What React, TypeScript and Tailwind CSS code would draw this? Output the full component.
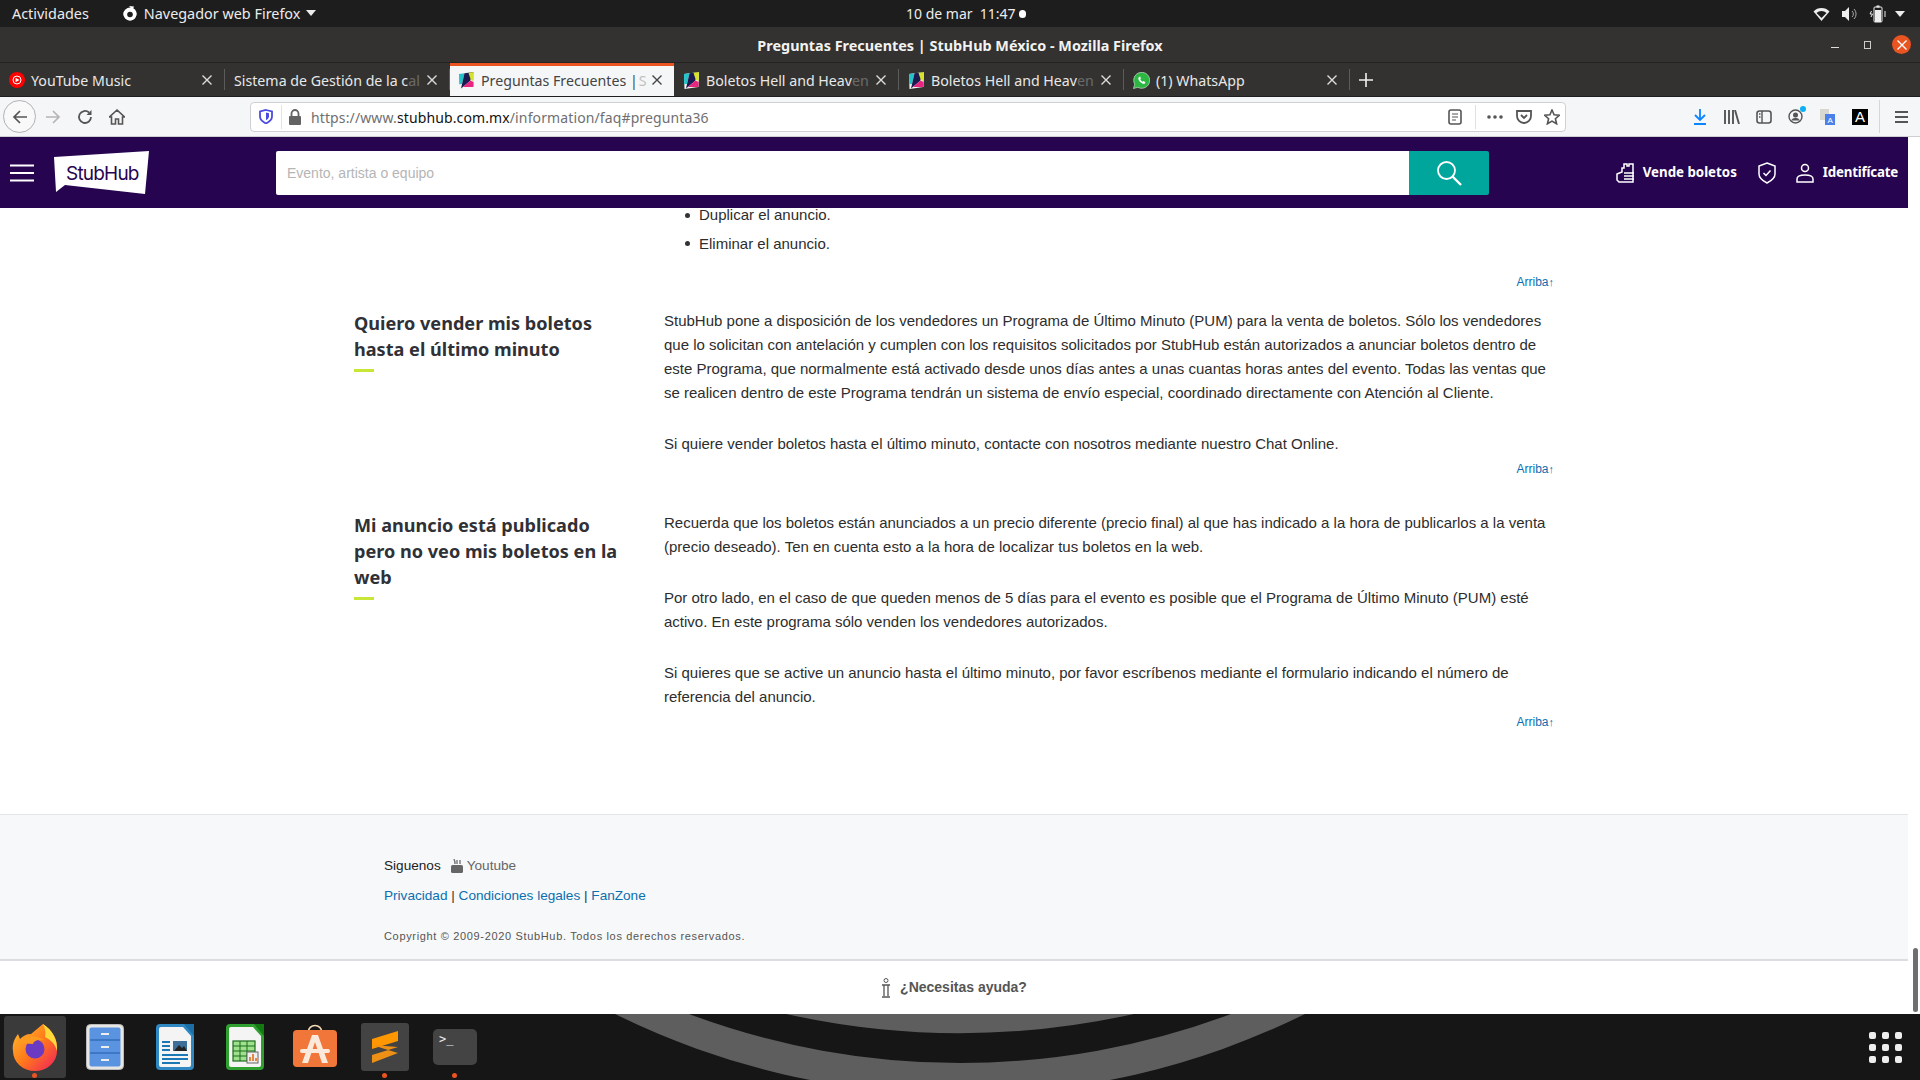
import React from "react";

const UI = { fontFamily: '"Noto Sans", "Open Sans", sans-serif' };
const ARIAL = { fontFamily: '"Liberation Sans", Arial, sans-serif' };

const Fav = () => (
  <svg width="17" height="17" viewBox="0 0 17 17" className="shrink-0">
    <polygon points="1,2 16,0 15.500,15 1.500,17" fill="#f4f4f4" />
    <polygon points="1,2 6.500,1.300 4,12 1.200,12.300" fill="#25c3c9" />
    <polygon points="6.500,1.300 16,0 12,9 3,16.500" fill="#1c1a50" />
    <polygon points="10.500,.8 16,0 15.700,9 12.800,8" fill="#d6e32e" />
    <polygon points="5,15 12.500,8.500 15.600,10 15.500,15 " fill="#e8267f" />
  </svg>
);

const Close = ({ c = "#ddd" }: { c?: string }) => (
  <svg width="12" height="12" viewBox="0 0 12 12" className="shrink-0">
    <path d="M1.500 1.500l9 9M10.500 1.500l-9 9" stroke={c} strokeWidth="1.400" />
  </svg>
);

function Tab({ w, icon, label, tail, active, sep = true }: { w: string; icon?: React.ReactNode; label: string; tail?: string; active?: boolean; sep?: boolean }) {
  return (
    <div className={`${w} h-full relative flex items-center shrink-0 ${active ? "bg-[#f5f6f7] text-[#444] border-t-[3px] border-[#e95420] pb-[1px]" : "text-[#e8e8e8] pt-[2px]"}`}>
      <div className={`flex items-center gap-[6px] ${active ? "pl-[8px] pr-[11px]" : "pl-[9px] pr-[12px]"} w-full`}>
        {icon}
        <span className="flex-1 min-w-0 whitespace-nowrap">{label}{tail && <span className={`opacity-30 ${active ? "ml-[1px]" : ""}`}>{tail}</span>}</span>
        <Close c={active ? "#444" : "#ddd"} />
      </div>
      {sep && !active && <div className="absolute right-0 top-[6px] bottom-[6px] w-px bg-[#5c5c5c]" />}
    </div>
  );
}

const TopBar = () => (
  <div className="h-[27px] bg-[#1d1d1d] text-[#ececec] text-[14.4px] flex items-center justify-between pl-3 pr-[15px] relative shrink-0" style={UI}>
    <div className="flex items-center gap-[33px]">
      <span>Actividades</span>
      <div className="flex items-center gap-[6px]">
        <svg width="16" height="17" viewBox="0 0 16 17"><path d="M8 2.500a6.500 6.500 0 1 1-5.500 3L4 8a4 4 0 1 0 4-2.500l1.500-2L7 1l5 .5-1 2.500z" fill="#fff" /><circle cx="8" cy="9" r="6.500" fill="#fff" /><circle cx="8" cy="9.500" r="2.800" fill="#1d1d1d" /></svg>
        <span>Navegador web Firefox</span>
        <svg width="10" height="6" viewBox="0 0 10 6"><path d="M0 0h10L5 6z" fill="#ececec" /></svg>
      </div>
    </div>
    <div className="absolute left-[906px] top-0 h-full flex items-center gap-[3px] text-[14px]">
      <span className="whitespace-pre">10 de mar  11:47</span>
      <span className="w-[7px] h-[8px] rounded-full bg-white" />
    </div>
    <div className="flex items-center">
      <svg width="17" height="14" viewBox="0 0 17 14"><path d="M0.500 4.500a11 11 0 0 1 16 0L8.500 14z" fill="#eee" /><path d="M3.500 6a7 7 0 0 1 10 0L8.500 11z" fill="#1d1d1d" /></svg>
      <svg width="16" height="14" viewBox="0 0 16 14" className="ml-[12px]"><path d="M0 4h3l4-4v14l-4-4H0z" fill="#eee" /><path d="M10 4a4 4 0 0 1 0 6M12 2a7 7 0 0 1 0 10" stroke="#aaa" fill="none" /></svg>
      <svg width="18" height="18" viewBox="0 0 18 18" className="ml-[11px]"><rect x="5" y="2" width="8" height="15" rx="1" fill="none" stroke="#eee" /><rect x="6" y="5" width="6" height="12" fill="#eee" /><rect x="7.500" y="0.500" width="3" height="2" fill="#eee" /><path d="M2.500 6l-1.500 3h2.500l-1.500 3M16 6v6" stroke="#eee" fill="none" /></svg>
      <svg width="10" height="6" viewBox="0 0 10 6" className="ml-[8px]"><path d="M0 0h10L5 6z" fill="#ececec" /></svg>
    </div>
  </div>
);

const TitleBar = () => (
  <div className="h-[36px] bg-[#333230] border-b border-[#242424] flex items-center justify-center relative shrink-0 pt-[2px]" style={UI}>
    <span className="text-[#f2f2f2] text-[14.4px] font-bold">Preguntas Frecuentes | StubHub México - Mozilla Firefox</span>
    <div className="absolute right-[9px] top-0 h-full flex items-center">
      <span className="w-[8px] h-px bg-[#ddd] mt-[6px]" />
      <span className="w-[7px] h-[8px] border border-[#ccc] ml-[25px]" />
      <span className="w-[19px] h-[19px] rounded-full bg-[#e95420] flex items-center justify-center ml-[21px]"><Close c="#fff" /></span>
    </div>
  </div>
);

const TabBar = () => (
  <div className="h-[34px] bg-[#333230] border-b border-[#1f1f1f] flex items-center text-[14.2px] shrink-0" style={UI}>
    <Tab w="w-[225px]" label="YouTube Music" icon={
      <svg width="16" height="16" viewBox="0 0 16 16" className="shrink-0"><circle cx="8" cy="8" r="8" fill="#f00" /><circle cx="8" cy="8" r="4" fill="none" stroke="#fff" /><path d="M6.500 5.800L10.500 8l-4 2.200z" fill="#fff" /></svg>
    } />
    <Tab w="w-[225px]" label="Sistema de Gestión de la c" tail="al" />
    <Tab w="w-[224px]" label="Preguntas Frecuentes |" tail="S" icon={<Fav />} active sep={false} />
    <Tab w="w-[225px]" label="Boletos Hell and Heav" tail="en" icon={<Fav />} />
    <Tab w="w-[225px]" label="Boletos Hell and Heav" tail="en" icon={<Fav />} />
    <Tab w="w-[226px]" label="(1) WhatsApp" icon={
      <svg width="17" height="17" viewBox="0 0 17 17" className="shrink-0"><path d="M0.500 16.500l1.200-4.300A8 8 0 1 1 4.800 15.300z" fill="#2cb742" stroke="#e9f7ea" strokeWidth=".6" /><path d="M6 5c-1.500 1.500 0 4 1.500 5.200s3.200 2.200 4.500 1.200l.3-1.500-2-1-.8.800C8.500 9.200 7.800 8.500 7.200 7.200l.7-.8L7.200 4.500z" fill="#fff" /></svg>
    } />
    <div className="w-[32px] h-full flex items-center justify-center">
      <svg width="14" height="14" viewBox="0 0 14 14"><path d="M7 0v14M0 7h14" stroke="#f0f0f0" strokeWidth="1.600" /></svg>
    </div>
  </div>
);

const IC = "#555";
const Toolbar = () => (
  <div className="h-[40px] bg-[#f5f6f7] border-b border-[#cfcfd2] flex items-center relative shrink-0" style={UI}>
    <div className="w-[33px] h-[33px] ml-[3px] rounded-full border border-[#b1b1b3] bg-[#f9f9fa] flex items-center justify-center">
      <svg width="16" height="16" viewBox="0 0 16 16"><path d="M15 8H2M8 2L2 8l6 6" stroke={IC} strokeWidth="1.700" fill="none" /></svg>
    </div>
    <div className="w-[33px] flex justify-center">
      <svg width="16" height="16" viewBox="0 0 16 16"><path d="M1 8h13M8 2l6 6-6 6" stroke="#b5b5b5" strokeWidth="1.700" fill="none" /></svg>
    </div>
    <div className="w-[32px] flex justify-center">
      <svg width="16" height="16" viewBox="0 0 16 16"><path d="M14 8a6 6 0 1 1-2-4.500" stroke={IC} strokeWidth="1.800" fill="none" /><path d="M14.500 1v5h-5z" fill={IC} /></svg>
    </div>
    <div className="w-[32px] flex justify-center">
      <svg width="16" height="16" viewBox="0 0 16 16"><path d="M8 1L0.500 8h2v7h4v-5h3v5h4V8h2z" stroke={IC} strokeWidth="1.600" fill="none" /></svg>
    </div>
    <div className="ml-[117px] w-[1316px] h-[30px] bg-white border border-[#cfd0d3] rounded-[4px] flex items-center">
      <div className="w-[31px] h-[24px] flex items-center justify-center border-r border-[#e3e3e3]">
        <svg width="14" height="15" viewBox="0 0 14 15"><path d="M7 1l6 1.500v5C13 11 10 13 7 14.500 4 13 1 11 1 7.500v-5z" fill="none" stroke="#4a4ae0" strokeWidth="1.800" /><path d="M7 3.500l3 .7v3c0 2-1.500 3-3 4z" fill="#4a4ae0" /></svg>
      </div>
      <svg width="14" height="16" viewBox="0 0 14 16" className="ml-[6px]"><rect x="1" y="7" width="12" height="9" rx="1" fill="#636363" /><path d="M3.500 7V4.500a3.500 3.500 0 0 1 7 0V7" stroke="#636363" strokeWidth="1.800" fill="none" /></svg>
      <span className="ml-[9px] mt-[2px] text-[14px] tracking-[0.12px] text-[#6f6f72] whitespace-nowrap flex-1">https://www.<span className="text-[#111]">stubhub.com.mx</span>/information/faq#pregunta36</span>
      <svg width="14" height="16" viewBox="0 0 14 16"><rect x="1" y="1" width="12" height="14" rx="2" fill="none" stroke={IC} strokeWidth="1.600" /><path d="M4 5h6M4 8h6M4 11h4" stroke={IC} strokeWidth="1.200" /></svg>
      <div className="w-px h-[24px] bg-[#e0e0e0] ml-[13px] mr-[11px]" />
      <svg width="16" height="4" viewBox="0 0 16 4"><circle cx="2" cy="2" r="1.800" fill={IC} /><circle cx="8" cy="2" r="1.800" fill={IC} /><circle cx="14" cy="2" r="1.800" fill={IC} /></svg>
      <svg width="16" height="16" viewBox="0 0 16 16" className="ml-[13px]"><path d="M1 2h14v5a7 7 0 0 1-14 0z" fill="none" stroke={IC} strokeWidth="1.800" /><path d="M5 6l3 3 3-3" fill="none" stroke={IC} strokeWidth="1.800" /></svg>
      <svg width="16" height="16" viewBox="0 0 16 16" className="ml-[12px] mr-[5px]"><path d="M8 1l2.100 4.800 5.200.5-3.900 3.400 1.200 5.100L8 12.100l-4.600 2.700 1.200-5.100L.7 6.300l5.200-.5z" fill="none" stroke={IC} strokeWidth="1.600" /></svg>
    </div>
    <div className="ml-[127px] flex items-center">
      <svg width="14" height="16" viewBox="0 0 14 16"><path d="M7 0v11M2 6l5 5 5-5" stroke="#0a84ff" strokeWidth="1.800" fill="none" /><path d="M1 15h12" stroke="#0a84ff" strokeWidth="2" /></svg>
      <svg width="16" height="14" viewBox="0 0 16 14" className="ml-[17px]"><path d="M1 0v14M5 0v14M9 0v14M11 0l4 14" stroke={IC} strokeWidth="1.900" fill="none" /></svg>
      <svg width="16" height="14" viewBox="0 0 16 14" className="ml-[16px]"><rect x="1" y="1" width="14" height="12" rx="2.500" fill="none" stroke={IC} strokeWidth="1.600" /><path d="M6 1v12M3 4h1.500M3 7h1.500" stroke={IC} strokeWidth="1.400" /></svg>
      <div className="relative ml-[16px] w-[15px] h-[15px]">
        <svg width="15" height="15" viewBox="0 0 15 15"><circle cx="7.500" cy="7.500" r="6.500" fill="none" stroke={IC} strokeWidth="1.400" /><circle cx="7.500" cy="6" r="2.500" fill={IC} /><path d="M3 11.500a5 5 0 0 1 9 0z" fill={IC} /></svg>
        <span className="absolute -top-[3px] -right-[3px] w-[6px] h-[6px] rounded-full bg-[#0cb0f4]" />
      </div>
      <svg width="15" height="16" viewBox="0 0 15 16" className="ml-[17px]"><rect x="0" y="0" width="9" height="11" fill="#d8d8d0" /><rect x="5" y="5" width="10" height="11" fill="#4a80e8" /><text x="7.500" y="14" fontSize="8" fill="#fff" style={ARIAL}>A</text></svg>
      <div className="ml-[17px] w-[16px] h-[16px] bg-black text-white text-[15px] leading-[16px] text-center" style={ARIAL}>A</div>
      <div className="w-px h-[33px] bg-[#d6d6d6] ml-[11px]" />
      <svg width="13" height="12" viewBox="0 0 13 12" className="ml-[15px]"><path d="M0 1h13M0 6h13M0 11h13" stroke={IC} strokeWidth="1.800" /></svg>
    </div>
  </div>
);

const Header = () => (
  <div className="h-[71px] bg-[#270450] flex items-center relative shrink-0 z-10">
    <svg width="24" height="18" viewBox="0 0 24 18" className="ml-[10px]"><path d="M0 1.500h24M0 9h24M0 16.500h24" stroke="#fff" strokeWidth="2.200" /></svg>
    <div className="relative ml-[20px] w-[95px] h-[43px]">
      <svg width="95" height="43" viewBox="0 0 95 43" className="absolute inset-0"><path d="M0 6L95 0 91 43 11 34 2 41z" fill="#fff" /></svg>
      <span className="absolute left-[12px] top-[9px] text-[19px] tracking-[-0.8px] text-[#270450]" style={{ fontFamily: "Inter, sans-serif" }}>StubHub</span>
    </div>
    <div className="ml-[127px] w-[1133px] h-[44px] bg-white rounded-l-[2px] flex items-center pl-[11px] pt-[1px] text-[14px] text-[#b5b5b5]">
      <span style={ARIAL}>Evento, artista o equipo</span>
    </div>
    <div className="w-[80px] h-[44px] bg-[#00a69c] rounded-r-[2px] flex items-center justify-center">
      <svg width="26" height="26" viewBox="0 0 26 26"><circle cx="10.500" cy="10.500" r="8.500" fill="none" stroke="#fff" strokeWidth="1.800" /><path d="M16.500 16.500L25 25" stroke="#fff" strokeWidth="2.400" /></svg>
    </div>
    <div className="flex-1" />
    <div className="flex items-center text-white text-[13.3px] font-bold pr-[10px]" style={UI}>
      <svg width="20" height="20" viewBox="0 0 20 20"><path d="M1 11l5-2V5h2V1h3v2h2V1h4v18H3l-2-2zM8 10h10M8 13h10M8 16h10" stroke="#fff" strokeWidth="1.500" fill="none" /></svg>
      <span className="ml-[7px]">Vende boletos</span>
      <svg width="18" height="22" viewBox="0 0 18 22" className="ml-[21px]"><path d="M9 1l8 3v8c0 4-4 7-8 9-4-2-8-5-8-9V4z" fill="none" stroke="#fff" strokeWidth="1.500" /><path d="M5.500 11l2.500 2.500 4.500-5" fill="none" stroke="#fff" strokeWidth="1.500" /></svg>
      <svg width="18" height="20" viewBox="0 0 18 20" className="ml-[20px]"><circle cx="9" cy="5" r="3.500" fill="none" stroke="#fff" strokeWidth="1.500" /><path d="M1 19v-3c0-2.500 3-4 8-4s8 1.500 8 4v3z" fill="none" stroke="#fff" strokeWidth="1.500" /></svg>
      <span className="ml-[9px] tracking-[-0.2px]">Identifícate</span>
    </div>
  </div>
);

const Arriba = () => (
  <div className="text-right text-[12px] leading-[18px] text-[#0b6fb0]" style={ARIAL}>Arriba<span className="text-[11px]">↑</span></div>
);

const P = ({ children }: { children: React.ReactNode }) => (
  <p className="text-[15px] leading-[24px] text-[#2d2d2d] mb-[27px]" style={ARIAL}>{children}</p>
);

const Title = ({ children, pt }: { children: React.ReactNode; pt?: string }) => (
  <div className={pt}>
    <h2 className="text-[18.1px] leading-[26px] font-bold text-[#2f3136]" style={UI}>{children}</h2>
    <div className="w-[20px] h-[3px] bg-[#c8e635] mt-[7px]" />
  </div>
);

const Section = ({ title, children, mt, pt }: { title: React.ReactNode; children: React.ReactNode; mt: string; pt?: string }) => (
  <div className={`grid grid-cols-[310px_890px] ${mt}`}>
    <Title pt={pt}>{title}</Title>
    <div>{children}</div>
  </div>
);

const Dot = () => <span className="w-[5px] h-[5px] rounded-full bg-[#333] ml-[-9px]" />;

const Content = () => (
  <div className="flex-1 pl-[354px] overflow-hidden">
    <ul className="pl-[340px] text-[15px] text-[#2d2d2d]" style={ARIAL}>
      <li className="flex items-center gap-[9px] h-[14px] leading-[14px]"><Dot />Duplicar el anuncio.</li>
      <li className="flex items-center gap-[9px] h-[29px] leading-[29px] mt-[7px]"><Dot />Eliminar el anuncio.</li>
    </ul>
    <div className="w-[1200px] mt-[15px]"><Arriba /></div>
    <Section title={<>Quiero vender mis boletos<br />hasta el último minuto</>} mt="mt-[19px]">
      <div className="-mt-[1px]">
        <P>StubHub pone a disposición de los vendedores un Programa de Último Minuto (PUM) para la venta de boletos. Sólo los vendedores que lo solicitan con antelación y cumplen con los requisitos solicitados por StubHub están autorizados a anunciar boletos dentro de este Programa, que normalmente está activado desde unos días antes a unas cuantas horas antes del evento. Todas las ventas que se realicen dentro de este Programa tendrán un sistema de envío especial, coordinado directamente con Atención al Cliente.</P>
        <p className="text-[15px] leading-[24px] text-[#2d2d2d]" style={ARIAL}>Si quiere vender boletos hasta el último minuto, contacte con nosotros mediante nuestro Chat Online.</p>
      </div>
      <div className="mt-[4px]"><Arriba /></div>
    </Section>
    <Section title={<>Mi anuncio está publicado<br />pero no veo mis boletos en la<br />web</>} mt="mt-[33px]" pt="pt-[1px]">
      <P>Recuerda que los boletos están anunciados a un precio diferente (precio final) al que has indicado a la hora de publicarlos a la venta (precio deseado). Ten en cuenta esto a la hora de localizar tus boletos en la web.</P>
      <P>Por otro lado, en el caso de que queden menos de 5 días para el evento es posible que el Programa de Último Minuto (PUM) esté activo. En este programa sólo venden los vendedores autorizados.</P>
      <p className="text-[15px] leading-[24px] text-[#2d2d2d]" style={ARIAL}>Si quieres que se active un anuncio hasta el último minuto, por favor escríbenos mediante el formulario indicando el número de referencia del anuncio.</p>
      <div className="mt-[4px]"><Arriba /></div>
    </Section>
  </div>
);

const Footer = () => (
  <div className="shrink-0" style={ARIAL}>
    <div className="h-[147px] bg-[#f7f8f9] border-t border-[#e3e4e6] border-b-2 border-b-[#dcdde0] pl-[384px] pt-[42px] text-[13.6px] text-[#222]">
      <div className="flex items-center h-[18px]">
        <span>Siguenos</span>
        <svg width="12" height="14" viewBox="0 0 12 14" className="ml-[10px]"><rect x="0" y="6" width="12" height="8" rx="1.500" fill="#666" /><path d="M3 0l1 3v2M6 1v4M9 1v4" stroke="#777" strokeWidth="1.400" /></svg>
        <span className="ml-[4px] text-[#666]">Youtube</span>
      </div>
      <div className="mt-[12px] h-[18px] leading-[18px] text-[#333]"><span className="text-[#0b6fb0]">Privacidad</span> | <span className="text-[#0b6fb0]">Condiciones legales</span> | <span className="text-[#0b6fb0]">FanZone</span></div>
      <div className="mt-[23px] text-[11px] tracking-[0.66px] text-[#555]">Copyright © 2009-2020 StubHub. Todos los derechos reservados.</div>
    </div>
    <div className="h-[53px] bg-white flex items-center justify-center gap-[9px]">
      <svg width="10" height="20" viewBox="0 0 10 20"><circle cx="5" cy="2.500" r="2" fill="none" stroke="#555" /><path d="M1 7h8M3 7v11M7 7v11M1 19h8" stroke="#555" strokeWidth="1.300" fill="none" /></svg>
      <span className="text-[14px] font-bold text-[#555]">¿Necesitas ayuda?</span>
    </div>
  </div>
);

const Tile = ({ bg, children, dot, w = "w-[70px]" }: { bg?: string; children: React.ReactNode; dot?: boolean; w?: string }) => (
  <div className={`${w} h-[66px] relative flex items-center justify-center`}>
    {bg && <div className={`absolute ${bg} rounded-[3px]`} />}
    <div className="relative flex">{children}</div>
    {dot && <span className="absolute bottom-[2px] left-1/2 -ml-[3px] w-[5px] h-[5px] rounded-full bg-[#e95420]" />}
  </div>
);

const Dock = () => (
  <div className="h-[66px] bg-[#161616] relative overflow-hidden shrink-0">
    <svg className="absolute left-0 top-0" width="1920" height="66" viewBox="0 0 1920 66">
      <path d="M786 0A806 806 0 0 0 1134 0z" fill="#5e5e5e" />
      <path d="M615 0A779 779 0 0 0 1305 0H1231A774 774 0 0 1 689 0z" fill="#5e5e5e" />
    </svg>
    <div className="relative flex items-center pl-0 h-full">
      <Tile dot bg="left-[4px] right-[4px] top-[2px] bottom-[2px] bg-[#3a3a3a]">
        <svg width="46" height="48" viewBox="0 0 46 48">
          <defs><linearGradient id="ff" x1="0" y1="0" x2="1" y2="1"><stop offset="0" stopColor="#ffc12e" /><stop offset=".5" stopColor="#ff7a1a" /><stop offset="1" stopColor="#f01d5f" /></linearGradient></defs>
          <path d="M31 1c9 6 15 15 14 27A22 20 0 0 1 1 28C0 22 2 16 6 11l2 5c3-3 6-5 11-5z" fill="url(#ff)" />
          <path d="M31 1c9 6 15 15 14 27-2-7-6-11-12-14 1-5 0-9-2-13z" fill="#ffd83a" />
          <circle cx="23" cy="26" r="9.500" fill="#6b3ac2" />
          <path d="M6 20c5-7 16-9 27-3-8-1-11 1-12 4z" fill="#ff9a20" />
        </svg>
      </Tile>
      <Tile>
        <svg width="38" height="46" viewBox="0 0 38 46"><rect x="0.500" y="0.500" width="37" height="45" rx="4" fill="#e8e6e2" stroke="#bbb" /><rect x="3.500" y="3.500" width="31" height="39" rx="2" fill="#5a93e0" /><path d="M4 16h30M4 29h30" stroke="#1d5ca8" strokeWidth="1.200" /><path d="M15 10h8M15 23h8M15 36h8" stroke="#eee" strokeWidth="1.800" /></svg>
      </Tile>
      <Tile>
        <svg width="38" height="46" viewBox="0 0 38 46"><path d="M24 0l14 14V0z" fill="#1c6ea4" /><path d="M4 0h24l10 12v30a4 4 0 0 1-4 4H4a4 4 0 0 1-4-4V4a4 4 0 0 1 4-4z" fill="#2f88c2" /><path d="M5 3h22l8 9v29a2 2 0 0 1-2 2H5a2 2 0 0 1-2-2V5a2 2 0 0 1 2-2z" fill="#f4f4f4" /><rect x="17" y="17" width="14" height="10" fill="#3d6f98" /><path d="M18 27l5-6 3 3 2-2 3 5z" fill="#222" /><path d="M6 18h8M6 22h8M6 26h8M6 31h26M6 35h26M6 39h18" stroke="#1c78b4" strokeWidth="1.800" /></svg>
      </Tile>
      <Tile>
        <svg width="38" height="46" viewBox="0 0 38 46"><path d="M24 0l14 14V0z" fill="#137a13" /><path d="M4 0h24l10 12v30a4 4 0 0 1-4 4H4a4 4 0 0 1-4-4V4a4 4 0 0 1 4-4z" fill="#2fa02f" /><path d="M5 3h22l8 9v29a2 2 0 0 1-2 2H5a2 2 0 0 1-2-2V5a2 2 0 0 1 2-2z" fill="#f4f4f4" /><rect x="7" y="17" width="22" height="20" fill="#9fe08f" stroke="#1b6d1b" strokeWidth="1.200" /><path d="M7 22h22M7 27h22M7 32h22M14 17v20M21 17v20" stroke="#1b6d1b" /><rect x="21" y="28" width="11" height="11" fill="#eee" stroke="#666" /><path d="M24 37v-4M27 37v-7M30 37v-3" stroke="#e06b1a" strokeWidth="1.600" /></svg>
      </Tile>
      <Tile>
        <svg width="46" height="46" viewBox="0 0 46 46"><path d="M16 9c0-10 14-10 14 0" fill="none" stroke="#f4d9b8" strokeWidth="1.600" /><rect x="1" y="6" width="44" height="37" rx="4" fill="#f1763a" /><path d="M20 11h6l10 28h-6L23 18l-7 21h-6z" fill="#fbeadc" /><rect x="8" y="25" width="30" height="4" rx="2" fill="#fbeadc" /></svg>
      </Tile>
      <Tile dot bg="left-[11px] right-[11px] top-[9px] bottom-[9px] bg-[#434343]">
        <svg width="26" height="32" viewBox="0 0 26 32"><path d="M26 0v10L0 18V8z" fill="#ff9800" /><path d="M0 14l26 8v0L0 32v-8l26-8z" fill="#ef9016" /></svg>
      </Tile>
      <Tile dot>
        <div className="w-[44px] h-[36px] bg-[#444] rounded-[5px] text-[#eee] text-[12px] leading-[12px] pl-[6px] pt-[4px]" style={{ fontFamily: '"DejaVu Sans Mono", monospace' }}>&gt;_</div>
      </Tile>
    </div>
    <div className="absolute right-[18px] top-[18px] grid grid-cols-3 gap-x-[6px] gap-y-[5px]">
      {Array.from({ length: 9 }).map((_, i) => <span key={i} className="w-[7px] h-[7px] rounded-[2px] bg-[#eee]" />)}
    </div>
  </div>
);

export default function App() {
  return (
    <div className="w-[1920px] h-[1080px] overflow-hidden flex flex-col bg-white">
      <TopBar />
      <TitleBar />
      <TabBar />
      <Toolbar />
      <div className="flex-1 min-h-0 flex">
        <div className="w-[1908px] flex flex-col min-h-0">
          <Header />
          <Content />
          <Footer />
        </div>
        <div className="w-[12px] bg-white relative">
          <div className="absolute right-[2px] bottom-[2px] w-[5px] h-[64px] bg-[#6e6e6e] rounded-full" />
        </div>
      </div>
      <Dock />
    </div>
  );
}
